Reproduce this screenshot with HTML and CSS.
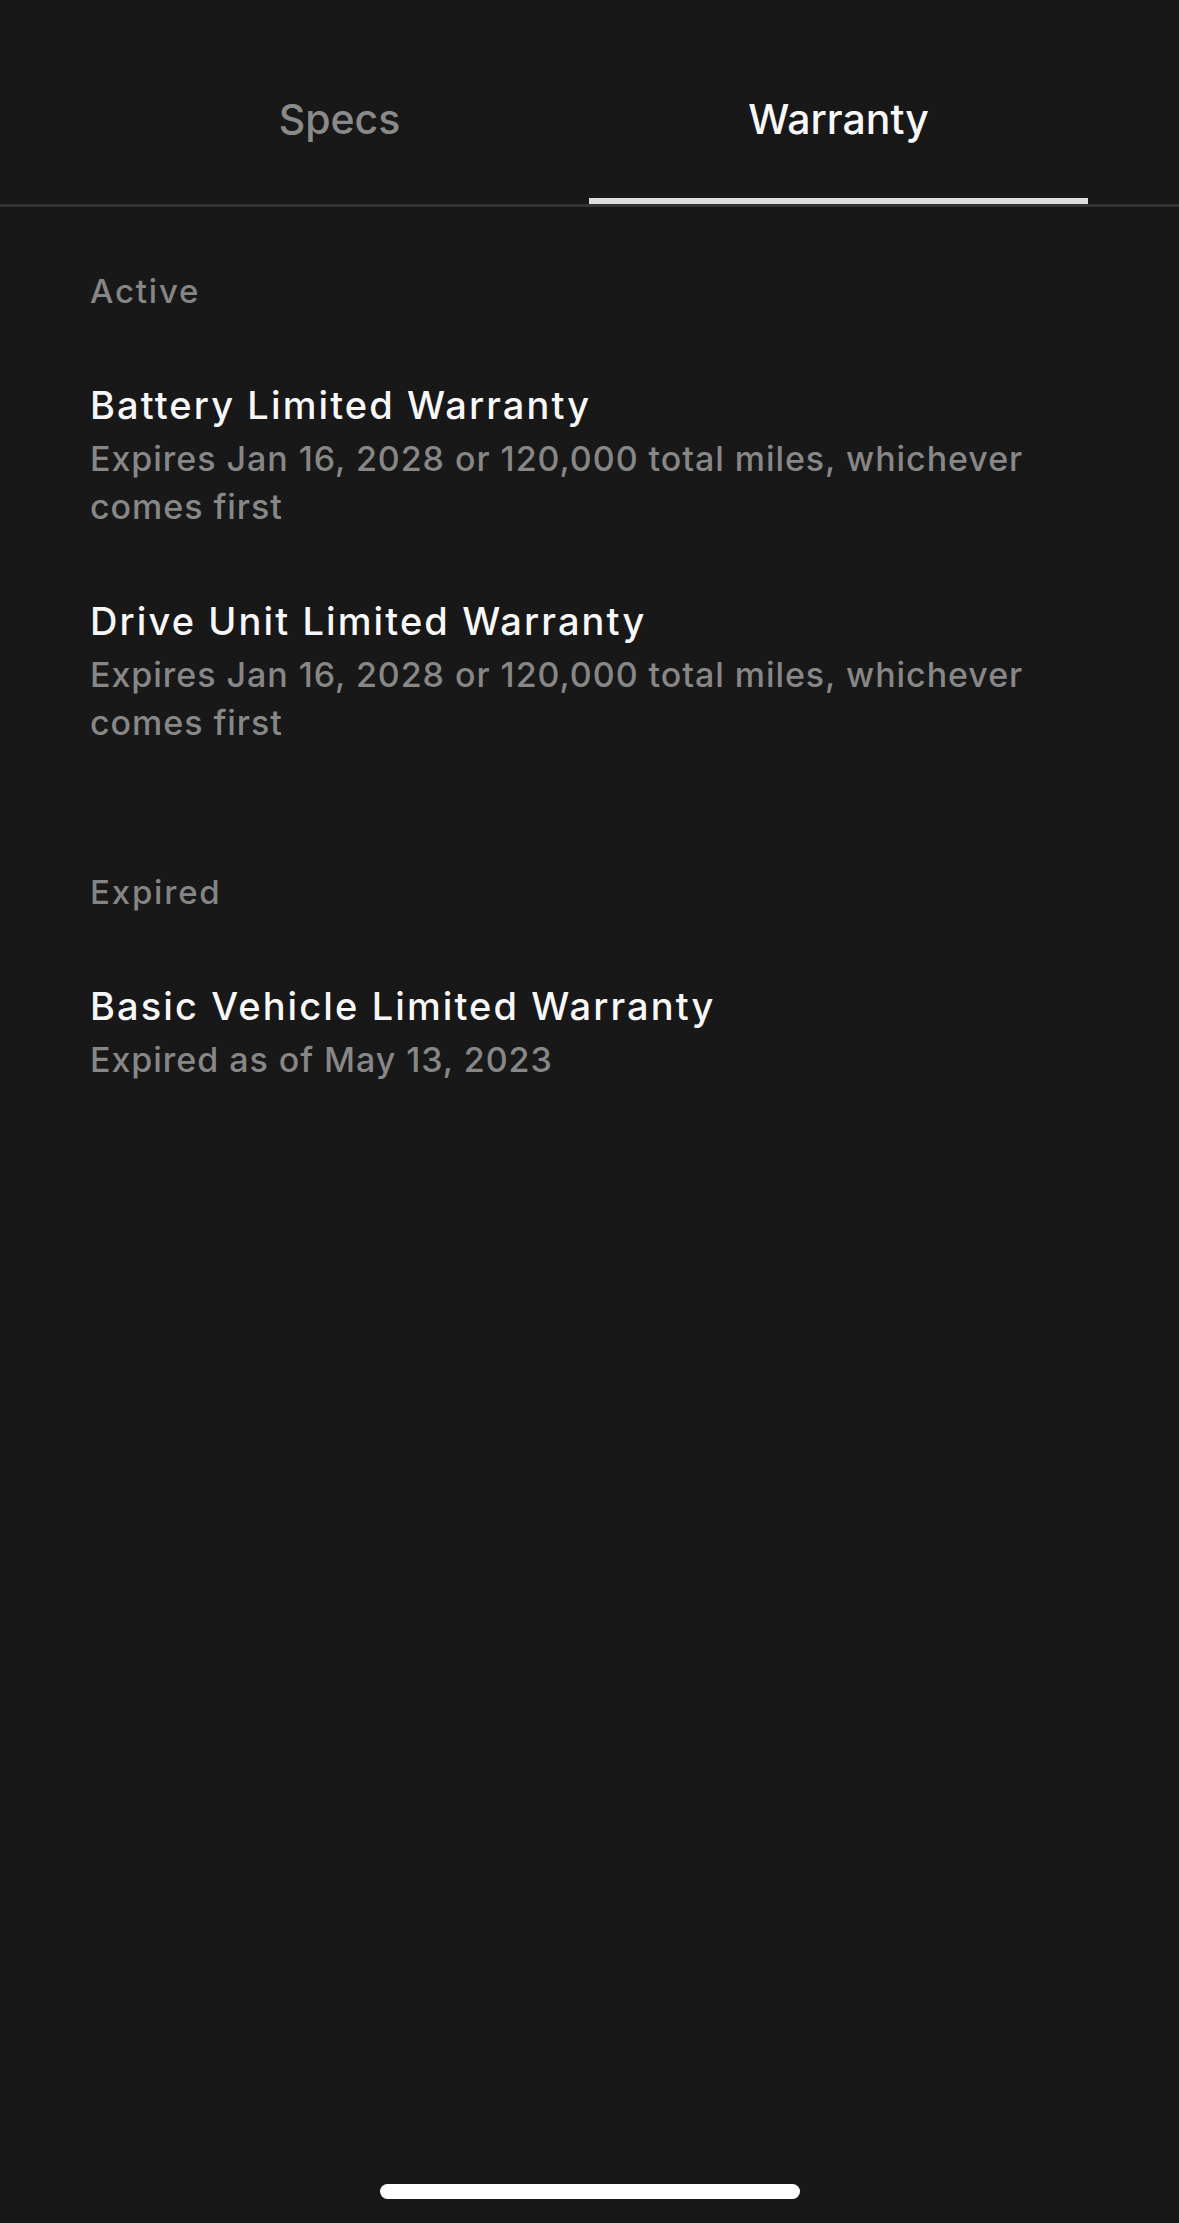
FILE: index.html
```html
<!DOCTYPE html>
<html lang="en">
<head>
    <meta charset="UTF-8">
    <meta name="viewport" content="width=device-width, initial-scale=1.0">
    <title>Warranty</title>
    <link rel="stylesheet" href="styles.css">
</head>
<body>
    <div class="screen">
        <div class="tabs">
            <div class="tab">Specs</div>
            <div class="tab active">Warranty</div>
        </div>
        <div class="content">
            <div class="section">
                <div class="section-label">Active</div>
                <div class="item">
                    <div class="item-title">Battery Limited Warranty</div>
                    <div class="item-sub">Expires Jan 16, 2028 or 120,000 total miles, whichever comes first</div>
                </div>
                <div class="item">
                    <div class="item-title">Drive Unit Limited Warranty</div>
                    <div class="item-sub">Expires Jan 16, 2028 or 120,000 total miles, whichever comes first</div>
                </div>
            </div>
            <div class="section">
                <div class="section-label">Expired</div>
                <div class="item">
                    <div class="item-title">Basic Vehicle Limited Warranty</div>
                    <div class="item-sub">Expired as of May 13, 2023</div>
                </div>
            </div>
        </div>
        <div class="home-bar"></div>
    </div>
</body>
</html>
```

FILE: styles.css
```css
body {
    margin: 0;
    padding: 0;
    background-color: #181818;
    color: #f5f5f5;
    font-family: Inter, "Noto Sans", sans-serif;
    font-weight: 500;
}
.screen {
    height: 2223px;
    display: flex;
    flex-direction: column;
}
.tabs {
    display: flex;
    padding: 0 91px 0 90px;
    border-bottom: 3px solid #333;
}
.tab {
    flex: 1;
    height: 158px;
    padding-top: 40px;
    display: flex;
    align-items: center;
    justify-content: center;
    font-size: 41px;
    color: #8a8a8a;
    border-bottom: 6px solid transparent;
}
.tab.active {
    color: #f7f7f7;
    border-bottom-color: #dedede;
}
.content {
    flex: 1;
    padding: 64px 90px 0 90px;
}
.section + .section {
    margin-top: 125px;
}
.section-label {
    font-size: 33px;
    line-height: 40px;
    font-weight: 550;
    letter-spacing: 1.8px;
    color: #858585;
}
.item {
    margin-top: 70px;
}
.item + .item {
    margin-top: 66px;
}
.item-title {
    font-size: 38px;
    line-height: 48px;
    font-weight: 550;
    letter-spacing: 2.1px;
    color: #f7f7f7;
}
.item-sub {
    margin-top: 6px;
    font-size: 34px;
    line-height: 48px;
    font-weight: 550;
    letter-spacing: 0.95px;
    color: #878787;
}
.home-bar {
    align-self: center;
    width: 420px;
    height: 15px;
    border-radius: 8px;
    background-color: #fff;
    margin-bottom: 24px;
}
```
